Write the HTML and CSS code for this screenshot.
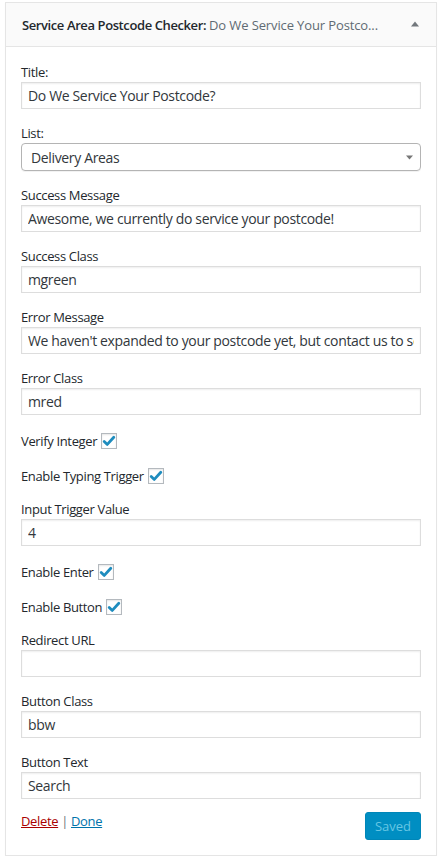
FILE: index.html
```html
<!DOCTYPE html>
<html>
<head>
<meta charset="utf-8">
<link rel="stylesheet" href="styles.css">
</head>
<body>
<div class="page">
  <div class="widget">
    <div class="widget-top">
      <h3 class="widget-title"><span class="name">Service Area Postcode Checker:</span> <span class="in-title">Do We Service Your Postco...</span></h3>
      <svg class="toggle" width="8" height="6" viewBox="0 0 8 6"><path d="M0 5.5 L4 0.5 L8 5.5 Z" fill="#72777c"/></svg>
    </div>
    <div class="widget-body">
      <div class="field">
        <label class="lbl">Title:</label>
        <input class="txt" type="text" value="Do We Service Your Postcode?">
      </div>
      <div class="field">
        <label class="lbl">List:</label>
        <div class="select"><span>Delivery Areas</span><svg width="7" height="5" viewBox="0 0 7 5"><path d="M0 0.5 L7 0.5 L3.5 4.5 Z" fill="#777"/></svg></div>
      </div>
      <div class="field">
        <label class="lbl">Success Message</label>
        <input class="txt" type="text" value="Awesome, we currently do service your postcode!">
      </div>
      <div class="field">
        <label class="lbl">Success Class</label>
        <input class="txt" type="text" value="mgreen">
      </div>
      <div class="field">
        <label class="lbl">Error Message</label>
        <input class="txt" type="text" value="We haven't expanded to your postcode yet, but contact us to see what we can do">
      </div>
      <div class="field">
        <label class="lbl">Error Class</label>
        <input class="txt" type="text" value="mred">
      </div>
      <div class="check-row"><span>Verify Integer</span><span class="cb"><svg width="14" height="14" viewBox="0 0 14 14"><path d="M2.2 7.4 L5.3 10.4 L11.8 3.2" fill="none" stroke="#1e8cbe" stroke-width="2.8" stroke-linecap="round" stroke-linejoin="round"/></svg></span></div>
      <div class="check-row"><span>Enable Typing Trigger</span><span class="cb"><svg width="14" height="14" viewBox="0 0 14 14"><path d="M2.2 7.4 L5.3 10.4 L11.8 3.2" fill="none" stroke="#1e8cbe" stroke-width="2.8" stroke-linecap="round" stroke-linejoin="round"/></svg></span></div>
      <div class="field">
        <label class="lbl">Input Trigger Value</label>
        <input class="txt" type="text" value="4">
      </div>
      <div class="check-row"><span>Enable Enter</span><span class="cb"><svg width="14" height="14" viewBox="0 0 14 14"><path d="M2.2 7.4 L5.3 10.4 L11.8 3.2" fill="none" stroke="#1e8cbe" stroke-width="2.8" stroke-linecap="round" stroke-linejoin="round"/></svg></span></div>
      <div class="check-row"><span>Enable Button</span><span class="cb"><svg width="14" height="14" viewBox="0 0 14 14"><path d="M2.2 7.4 L5.3 10.4 L11.8 3.2" fill="none" stroke="#1e8cbe" stroke-width="2.8" stroke-linecap="round" stroke-linejoin="round"/></svg></span></div>
      <div class="field">
        <label class="lbl">Redirect URL</label>
        <input class="txt" type="text" value="">
      </div>
      <div class="field">
        <label class="lbl">Button Class</label>
        <input class="txt" type="text" value="bbw">
      </div>
      <div class="field">
        <label class="lbl">Button Text</label>
        <input class="txt" type="text" value="Search">
      </div>
      <div class="actions">
        <div class="links"><a class="delete" href="#">Delete</a> <span class="sep">|</span> <a class="done" href="#">Done</a></div>
        <button class="saved" type="button">Saved</button>
      </div>
    </div>
  </div>
</div>
</body>
</html>
```

FILE: styles.css
```css
* { box-sizing: border-box; }
html, body { margin: 0; padding: 0; background: #fff; }
body {
  font-family: "Open Sans", "Noto Sans", sans-serif;
  font-size: 13px;
  letter-spacing: -0.35px;
  color: #23282d;
}
.page { padding: 2px 7px 0 5px; }
.widget {
  width: 432px;
  border: 1px solid #e5e5e5;
  background: #fff;
  box-shadow: 0 1px 1px rgba(0,0,0,0.04);
}
.widget-top {
  height: 44px;
  background: #fafafa;
  border-bottom: 1px solid #e5e5e5;
  display: flex;
  align-items: center;
  justify-content: space-between;
  padding: 0 17px 0 16px;
}
.widget-title {
  margin: 0;
  font-size: 13px;
  font-weight: 600;
  letter-spacing: -0.4px;
  color: #23282d;
  white-space: nowrap;
}
.widget-title .in-title { font-weight: 400; color: #606a73; letter-spacing: -0.12px; }
.toggle { display: block; margin-top: -1px; }
.widget-body {
  padding: 16px 15px 15px 15px;
  display: flex;
  flex-direction: column;
  gap: 15px;
}
.field { display: flex; flex-direction: column; }
.lbl { line-height: 19px; height: 19px; color: #23282d; }
.txt {
  width: 400px;
  height: 27px;
  margin: 0;
  padding: 0 6px;
  border: 1px solid #ddd;
  box-shadow: inset 0 1px 2px rgba(0,0,0,0.07);
  font-family: inherit;
  font-size: 14px;
  letter-spacing: -0.35px;
  color: #32373c;
  background: #fff;
  outline: none;
}
.select {
  width: 400px;
  height: 28px;
  border: 1px solid #b4b4b4;
  border-radius: 4px;
  display: flex;
  align-items: center;
  justify-content: space-between;
  padding: 0 7px 0 9px;
  font-size: 14px;
  color: #32373c;
  box-shadow: 0 1px 0 rgba(0,0,0,0.05);
}
.select svg { display: block; }
.check-row {
  height: 20px;
  display: flex;
  align-items: center;
  gap: 4px;
  line-height: 18px;
  padding-top: 2px;
}
.cb {
  width: 16px;
  height: 16px;
  border: 1px solid #b4b9be;
  box-shadow: inset 0 1px 2px rgba(0,0,0,0.1);
  background: #fff;
  display: flex;
  align-items: center;
  justify-content: center;
}
.cb svg { display: block; }
.actions {
  margin-top: -2px;
  display: flex;
  justify-content: space-between;
  align-items: flex-start;
}
.links { line-height: 19px; }
.links a { text-decoration: underline; }
.delete { color: #a00; }
.done { color: #0073aa; }
.sep { color: #72777c; }
.saved {
  width: 56px;
  height: 28px;
  margin: 0;
  padding: 0;
  border: 1px solid #0086b8;
  border-radius: 3px;
  background: #008ec2;
  color: #66c6e4;
  font-family: inherit;
  font-size: 13px;
  line-height: 26px;
}
```
